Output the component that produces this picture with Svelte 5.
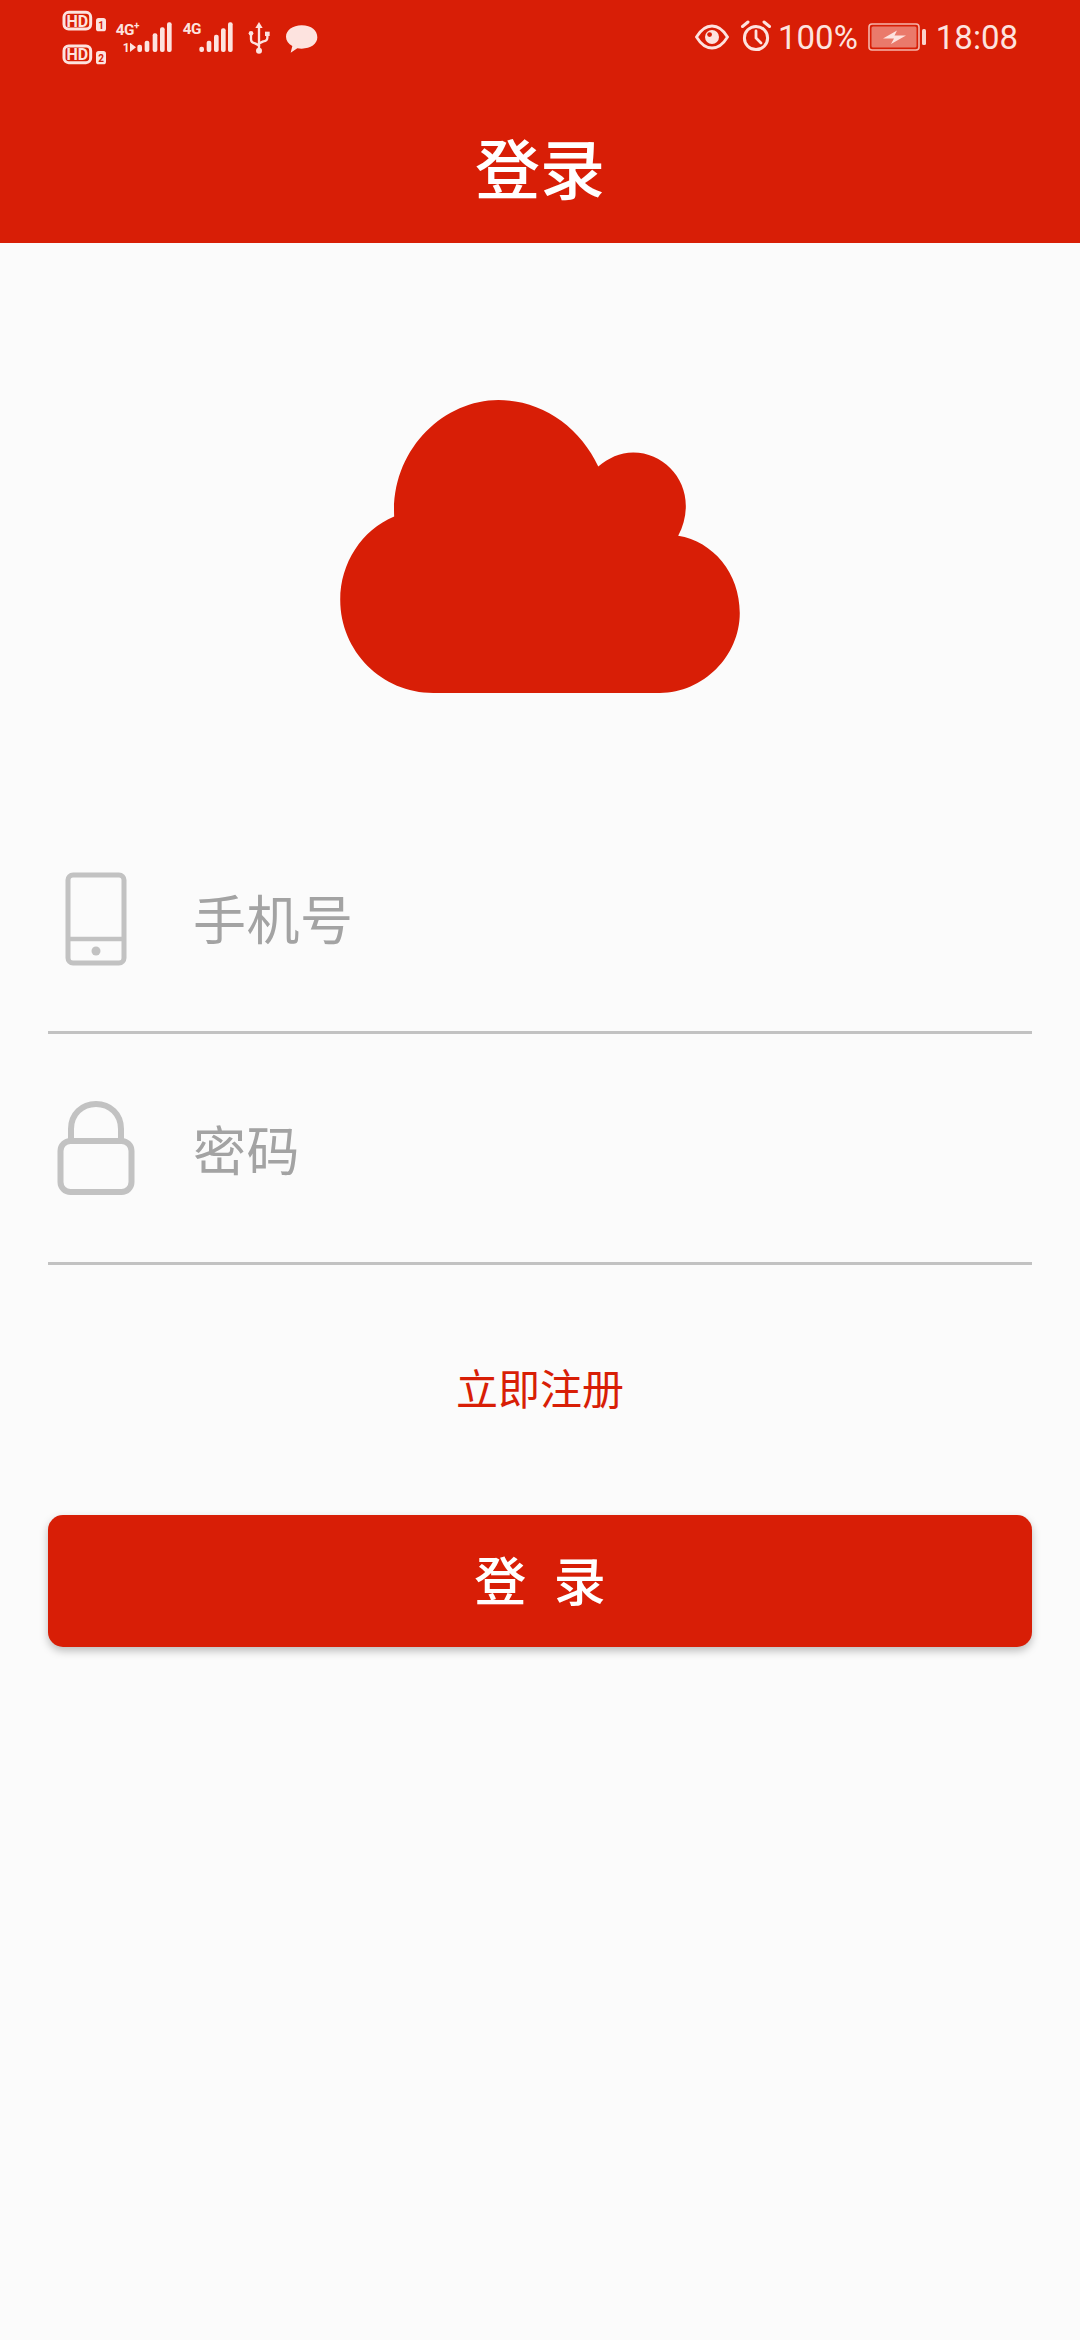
<script>
  const fields = [
    { label: '手机号', kind: 'phone' },
    { label: '密码', kind: 'lock' }
  ];
  const bars1 = [[299,134],[321,122],[345,100],[367,82],[388,67]];
  const bars2 = [[485,140],[507,122],[529,104],[550,85],[571,67]];
</script>

<div class="page">
  <header class="head">
    <div class="status">
      <svg class="left-icons" width="300" height="70" viewBox="0 0 900 210" aria-hidden="true">
        <g fill="none" stroke="#fde3df" stroke-width="9">
          <rect x="72" y="37" width="80" height="50" rx="14" />
          <rect x="72" y="138" width="80" height="50" rx="14" />
        </g>
        <g fill="#fde3df">
          <rect x="168" y="54" width="30" height="40" rx="8" />
          <rect x="168" y="153" width="30" height="40" rx="8" />
        </g>
        <g fill="#fde3df" font-family="'Roboto', sans-serif" font-weight="700">
          <text x="112" y="80" font-size="48" text-anchor="middle">HD</text>
          <text x="112" y="181" font-size="48" text-anchor="middle">HD</text>
          <text x="183" y="86" font-size="30" text-anchor="middle" fill="#d81e06">1</text>
          <text x="183" y="185" font-size="30" text-anchor="middle" fill="#d81e06">2</text>
          <text x="227" y="104" font-size="46" letter-spacing="-1">4G</text>
          <text x="282" y="86" font-size="30">+</text>
          <text x="428" y="102" font-size="46" letter-spacing="-1">4G</text>
          <text x="248" y="155" font-size="36">1</text>
        </g>
        <path d="M270 128 L270 156 L288 142 Z" fill="#fde3df" />
        <g fill="#fde3df">
          {#each bars1 as [x, y]}
            <rect x={x - 7} y={y} width="14" height={156 - y} rx="6" />
          {/each}
          {#each bars2 as [x, y]}
            <rect x={x - 7} y={y} width="14" height={156 - y} rx="6" />
          {/each}
        </g>
        <g fill="none" stroke="#fde3df" stroke-width="7" stroke-linecap="round" stroke-linejoin="round">
          <path d="M657 82 V150" />
          <path d="M633 105 V118 Q633 128 645 130 L657 136" />
          <path d="M682 105 V113 Q682 122 670 124 L657 130" />
        </g>
        <g fill="#fde3df">
          <path d="M657 66 L668 84 H646 Z" />
          <circle cx="633" cy="100" r="7" />
          <rect x="675" y="95" width="14" height="13" />
          <circle cx="657" cy="152" r="9" />
          <path d="M785 76 C815 76 832 92 832 112 C832 132 812 146 785 146 Q778 146 772 145 L752 158 L757 138 C745 131 738 122 738 110 C738 91 758 76 785 76 Z" />
        </g>
      </svg>

      <div class="right-icons">
        <svg class="eye" width="34" height="26" viewBox="0 0 34 26" aria-hidden="true">
          <path d="M1.5 13 C6 5.5 11 2 17 2 C23 2 28 5.5 32.5 13 C28 20.5 23 24 17 24 C11 24 6 20.5 1.5 13 Z" fill="none" stroke="#fde3df" stroke-width="2.8" />
          <circle cx="17" cy="13" r="7" fill="#fde3df" />
          <circle cx="14.6" cy="10.6" r="2.4" fill="#d81e06" />
        </svg>
        <svg class="alarm" width="32" height="32" viewBox="0 0 32 32" aria-hidden="true">
          <circle cx="16" cy="18" r="11.6" fill="none" stroke="#fde3df" stroke-width="3" />
          <path d="M16 11 V18 L21 23" fill="none" stroke="#fde3df" stroke-width="2.8" stroke-linecap="round" />
          <path d="M2.5 6.5 L8 2 M29.5 6.5 L24 2" stroke="#fde3df" stroke-width="3" stroke-linecap="round" />
        </svg>
        <span class="pct">100%</span>
        <svg class="batt" width="58" height="28" viewBox="0 0 58 28" aria-hidden="true">
          <rect x="1" y="1" width="50" height="26" rx="3" fill="none" stroke="#f5b5ab" stroke-width="1.6" />
          <rect x="3.5" y="3.5" width="45" height="21" rx="1.5" fill="#ea7a6b" />
          <path d="M15 15.5 L29 7.5 L26.5 12.5 L38 12.5 L23 21 L26 15.5 Z" fill="#fde3df" />
          <rect x="54" y="6" width="4" height="16" rx="1.5" fill="#fbd2cb" />
        </svg>
        <span class="time">18:08</span>
      </div>
    </div>
    <h1 class="title">登录</h1>
  </header>

  <main class="main">
    <svg class="cloud" width="400" height="293" viewBox="60 60 1200 880" aria-hidden="true">
      <path fill="#d81e06" d="M222 410 C212 210 370 60 535 60 C665 60 780 140 835 260 C865 235 900 218 940 218 C1027 218 1098 290 1098 378 C1098 410 1090 440 1075 468 C1180 485 1260 580 1260 700 C1260 830 1150 940 1020 940 L340 940 C185 940 60 815 60 660 C60 550 125 450 222 410 Z" />
    </svg>

    {#each fields as f}
      <div class="field">
        <div class="ficon" class:low={f.kind === 'phone'}>
          {#if f.kind === 'phone'}
            <svg width="62" height="94" viewBox="0 0 62 94" aria-hidden="true">
              <rect x="3" y="3" width="56" height="88" rx="5" fill="none" stroke="#c2c2c2" stroke-width="5" />
              <path d="M3 67 H59" stroke="#c2c2c2" stroke-width="4.5" />
              <circle cx="31" cy="79" r="4.5" fill="#c2c2c2" />
            </svg>
          {:else}
            <svg width="78" height="94" viewBox="0 0 78 94" aria-hidden="true">
              <rect x="3.5" y="40" width="71" height="51" rx="10" fill="none" stroke="#c2c2c2" stroke-width="6" />
              <path d="M14 40 V28 C14 13 25 3 39 3 C53 3 64 13 64 28 V40" fill="none" stroke="#c2c2c2" stroke-width="6" />
            </svg>
          {/if}
        </div>
        <span class="flabel">{f.label}</span>
      </div>
    {/each}

    <div class="register">立即注册</div>
    <button class="login" type="button">登 录</button>
  </main>
</div>

<style>
  :global(body) {
    margin: 0;
    background: #fbfbfb;
  }
  .page {
    width: 1080px;
    height: 2340px;
    background: #fbfbfb;
    font-family: "Noto Sans CJK SC", "Noto Sans", sans-serif;
    overflow: hidden;
  }
  .head {
    height: 243px;
    background: #d81e06;
    display: flex;
    flex-direction: column;
  }
  .status {
    height: 90px;
    display: flex;
    justify-content: space-between;
    padding-left: 40px;
    padding-right: 62px;
    box-sizing: border-box;
    flex: none;
  }
  .left-icons {
    display: block;
    flex: none;
  }
  .right-icons {
    height: 74px;
    display: flex;
    align-items: center;
    color: #fde3df;
    font-family: "Roboto", sans-serif;
    font-size: 33px;
  }
  .eye { margin-right: 11px; }
  .alarm { margin-right: 6px; margin-top: -2px; }
  .pct { margin-right: 10px; }
  .batt { margin-right: 10px; }
  .title {
    flex: 1;
    margin: 0;
    display: flex;
    align-items: center;
    justify-content: center;
    color: #fff;
    font-size: 65px;
    font-weight: 500;
    line-height: 1;
  }
  .main {
    padding: 157px 48px 0;
    display: flex;
    flex-direction: column;
  }
  .cloud {
    display: block;
    align-self: center;
    margin-bottom: 110px;
  }
  .field {
    height: 231px;
    box-sizing: border-box;
    border-bottom: 3px solid #c2c2c2;
    display: flex;
    align-items: center;
  }
  .ficon {
    width: 96px;
    margin-right: 49px;
    display: flex;
    justify-content: center;
    flex: none;
  }
  .ficon.low { padding-top: 4px; }
  .ficon svg { display: block; }
  .flabel {
    font-size: 53px;
    line-height: 1;
    color: #a3a3a3;
    letter-spacing: 0.5px;
  }
  .register {
    margin-top: 92px;
    height: 60px;
    line-height: 60px;
    text-align: center;
    font-size: 42px;
    color: #d81e06;
  }
  .login {
    margin-top: 98px;
    height: 132px;
    border: none;
    border-radius: 15px;
    background: #d81e06;
    color: #fff;
    font-family: inherit;
    font-size: 52px;
    font-weight: 500;
    letter-spacing: 8px;
    padding: 0 0 6px 8px;
    box-shadow: 0 4px 8px rgba(0, 0, 0, 0.25);
  }
</style>
